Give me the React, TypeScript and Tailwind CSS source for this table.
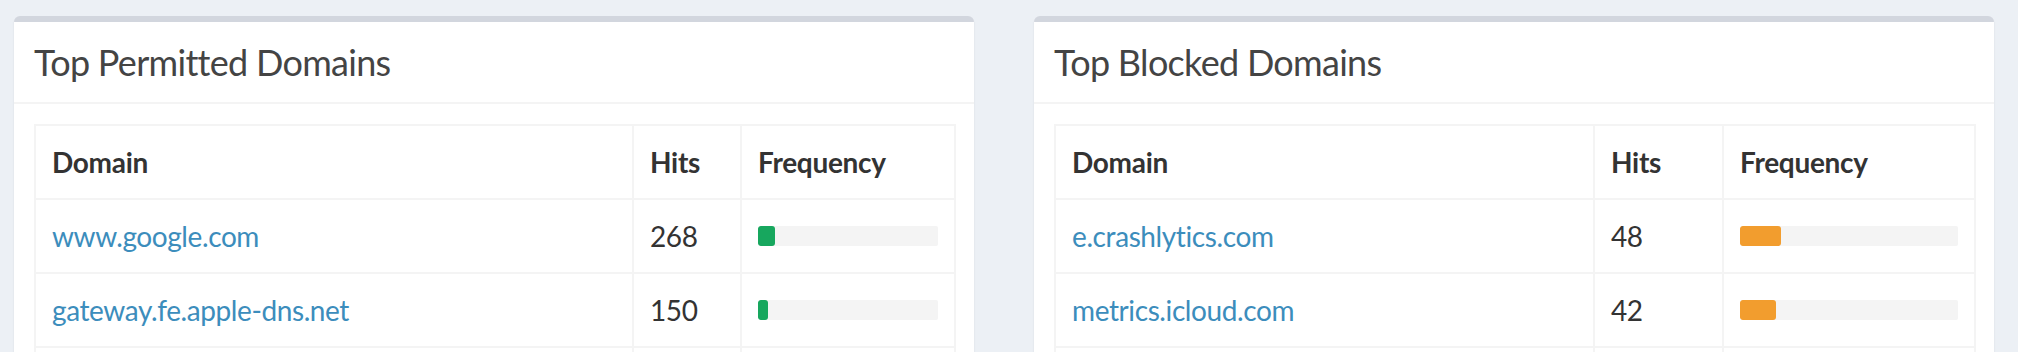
type DomainRow = { domain: string; hits: number; pct: number };

const permitted: DomainRow[] = [
  { domain: "www.google.com", hits: 268, pct: 9.5 },
  { domain: "gateway.fe.apple-dns.net", hits: 150, pct: 5.6 },
  { domain: "www.googleapis.com", hits: 121, pct: 4.5 },
];

const blocked: DomainRow[] = [
  { domain: "e.crashlytics.com", hits: 48, pct: 18.9 },
  { domain: "metrics.icloud.com", hits: 42, pct: 16.6 },
  { domain: "app-measurement.com", hits: 31, pct: 12.2 },
];

function DomainBox({
  title,
  rows,
  barClass,
  cols,
}: {
  title: string;
  rows: DomainRow[];
  barClass: string;
  cols: [string, string, string];
}) {
  return (
    <section className="flex-1 overflow-hidden rounded-[6px] border-t-[6px] border-[#d2d6de] bg-white shadow-[0_2px_2px_rgba(0,0,0,0.1)]">
      <div className="flex h-[82px] items-center border-b-2 border-[#f4f4f4] px-[20px]">
        <h3 className="text-[36px] leading-none font-normal tracking-[-0.7px] text-[#444]">{title}</h3>
      </div>
      <div className="p-[20px]">
        <table className="w-full table-fixed border-collapse border-2 border-[#f4f4f4] text-[28px] leading-[40px] text-[#333]">
          <colgroup>
            <col className={cols[0]} />
            <col className={cols[1]} />
            <col className={cols[2]} />
          </colgroup>
          <thead>
            <tr>
              <th className="border-2 border-[#f4f4f4] p-[16px] text-left font-bold tracking-[-0.3px]">Domain</th>
              <th className="border-2 border-[#f4f4f4] p-[16px] text-left font-bold tracking-[-0.3px]">Hits</th>
              <th className="border-2 border-[#f4f4f4] p-[16px] text-left font-bold tracking-[-0.3px]">Frequency</th>
            </tr>
          </thead>
          <tbody>
            {rows.map((row) => (
              <tr key={row.domain}>
                <td className="border-2 border-[#f4f4f4] p-[16px] tracking-[-0.4px]">
                  <a href="#" className="text-[#3c8dbc]">
                    {row.domain}
                  </a>
                </td>
                <td className="border-2 border-[#f4f4f4] p-[16px] tracking-[-0.4px]">{row.hits}</td>
                <td className="border-2 border-[#f4f4f4] p-[16px]">
                  <div className="flex h-[40px] items-center">
                    <div className="h-[20px] w-full overflow-hidden rounded-[2px] bg-[#f4f4f4]">
                      <div className={`h-full rounded-[3px] ${barClass}`} style={{ width: `${row.pct}%` }} />
                    </div>
                  </div>
                </td>
              </tr>
            ))}
          </tbody>
        </table>
      </div>
    </section>
  );
}

export default function App() {
  return (
    <div className="flex min-h-[352px] items-start gap-[60px] bg-[#ecf0f5] pt-[16px] pr-[24px] pl-[14px] font-['Lato',sans-serif]">
      <DomainBox
        title="Top Permitted Domains"
        rows={permitted}
        barClass="bg-[#17a75e]"
        cols={["w-[598px]", "w-[108px]", "w-[214px]"]}
      />
      <DomainBox
        title="Top Blocked Domains"
        rows={blocked}
        barClass="bg-[#f29d2e]"
        cols={["w-[539px]", "w-[129px]", "w-[252px]"]}
      />
    </div>
  );
}
